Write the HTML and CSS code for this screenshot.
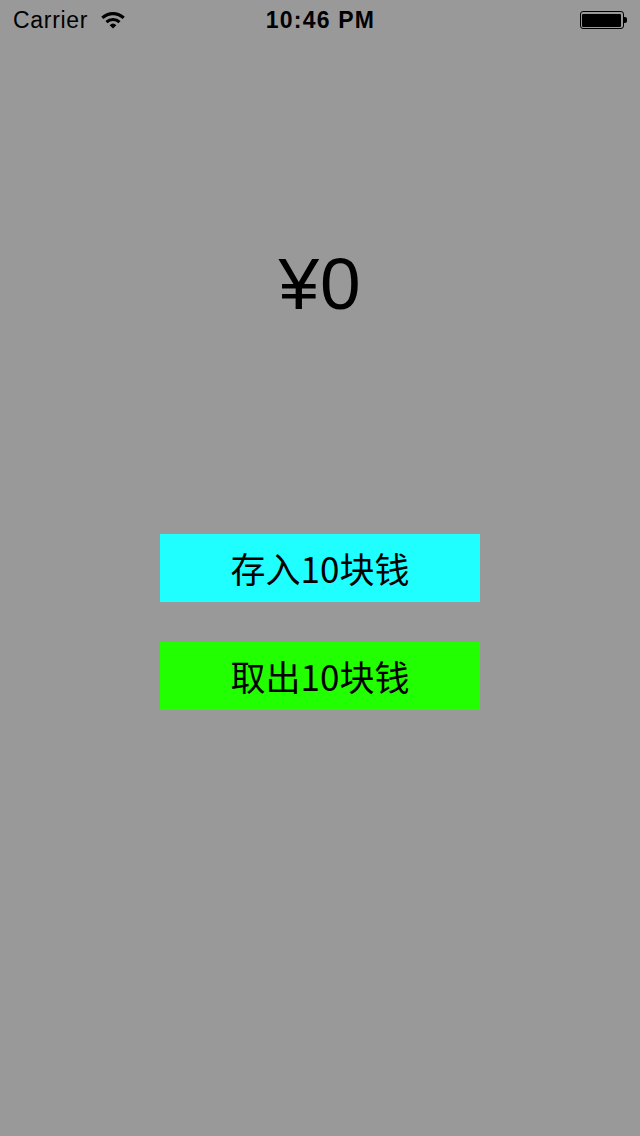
FILE: index.html
```html
<!DOCTYPE html>
<html>
<head>
<meta charset="utf-8">
<link rel="stylesheet" href="styles.css">
</head>
<body>
<div class="screen">
  <div class="status">
    <div class="status-left">
      <span class="carrier">Carrier</span>
      <svg class="wifi" width="26" height="20" viewBox="0 0 26 20">
        <path d="M1.2 6.8 A17 17 0 0 1 24.8 6.8 L22.6 9 A14 14 0 0 0 3.4 9 Z" fill="#000"/>
        <path d="M5.4 11 A11 11 0 0 1 20.6 11 L18.4 13.2 A8 8 0 0 0 7.6 13.2 Z" fill="#000"/>
        <path d="M9.6 15.2 A5 5 0 0 1 16.4 15.2 L13 18.6 Z" fill="#000"/>
      </svg>
    </div>
    <div class="time">10:46 PM</div>
    <div class="status-right">
      <div class="battery"><div class="battery-fill"></div></div>
      <div class="battery-nub"></div>
    </div>
  </div>
  <div class="content">
    <div class="amount">¥0</div>
    <div class="btn btn-save">存入10块钱</div>
    <div class="btn btn-take">取出10块钱</div>
  </div>
</div>
</body>
</html>
```
FILE: styles.css
```css
html, body {
  margin: 0;
  padding: 0;
}
body {
  background: #999999;
  font-family: "Liberation Sans", "Noto Sans CJK SC", sans-serif;
  color: #000;
}
.screen {
  width: 640px;
  height: 1136px;
  background: #999999;
  display: flex;
  flex-direction: column;
}
.status {
  height: 40px;
  display: flex;
  align-items: center;
  justify-content: space-between;
  padding: 0 12px 0 13px;
}
.status-left {
  display: flex;
  align-items: center;
  gap: 12px;
  width: 200px;
}
.carrier {
  font-family: "Liberation Sans", sans-serif;
  font-size: 23px;
  letter-spacing: 0.7px;
}
.wifi {
  margin-top: -1px;
}
.time {
  font-family: "Liberation Sans", sans-serif;
  font-weight: bold;
  font-size: 23px;
  letter-spacing: 1.2px;
}
.status-right {
  width: 200px;
  display: flex;
  justify-content: flex-end;
  align-items: center;
}
.battery {
  width: 44px;
  height: 18px;
  box-sizing: border-box;
  border: 1.5px solid #000;
  border-radius: 3px;
  padding: 1.5px;
}
.battery-fill {
  width: 100%;
  height: 100%;
  background: #000;
  border-radius: 1px;
}
.battery-nub {
  width: 3px;
  height: 6px;
  background: #000;
  border-radius: 0 2px 2px 0;
  margin-right: 1px;
}
.content {
  display: flex;
  flex-direction: column;
  align-items: center;
}
.amount {
  margin-top: 202px;
  font-family: "Liberation Sans", sans-serif;
  font-size: 73px;
  line-height: 84px;
  height: 84px;
  letter-spacing: 1px;
}
.btn {
  width: 320px;
  height: 68px;
  line-height: 68px;
  text-align: center;
  font-family: "Noto Sans CJK SC", sans-serif;
  font-size: 35px;
}
.btn-save {
  margin-top: 208px;
  background: #1fffff;
}
.btn-take {
  margin-top: 40px;
  background: #21ff00;
}
```
